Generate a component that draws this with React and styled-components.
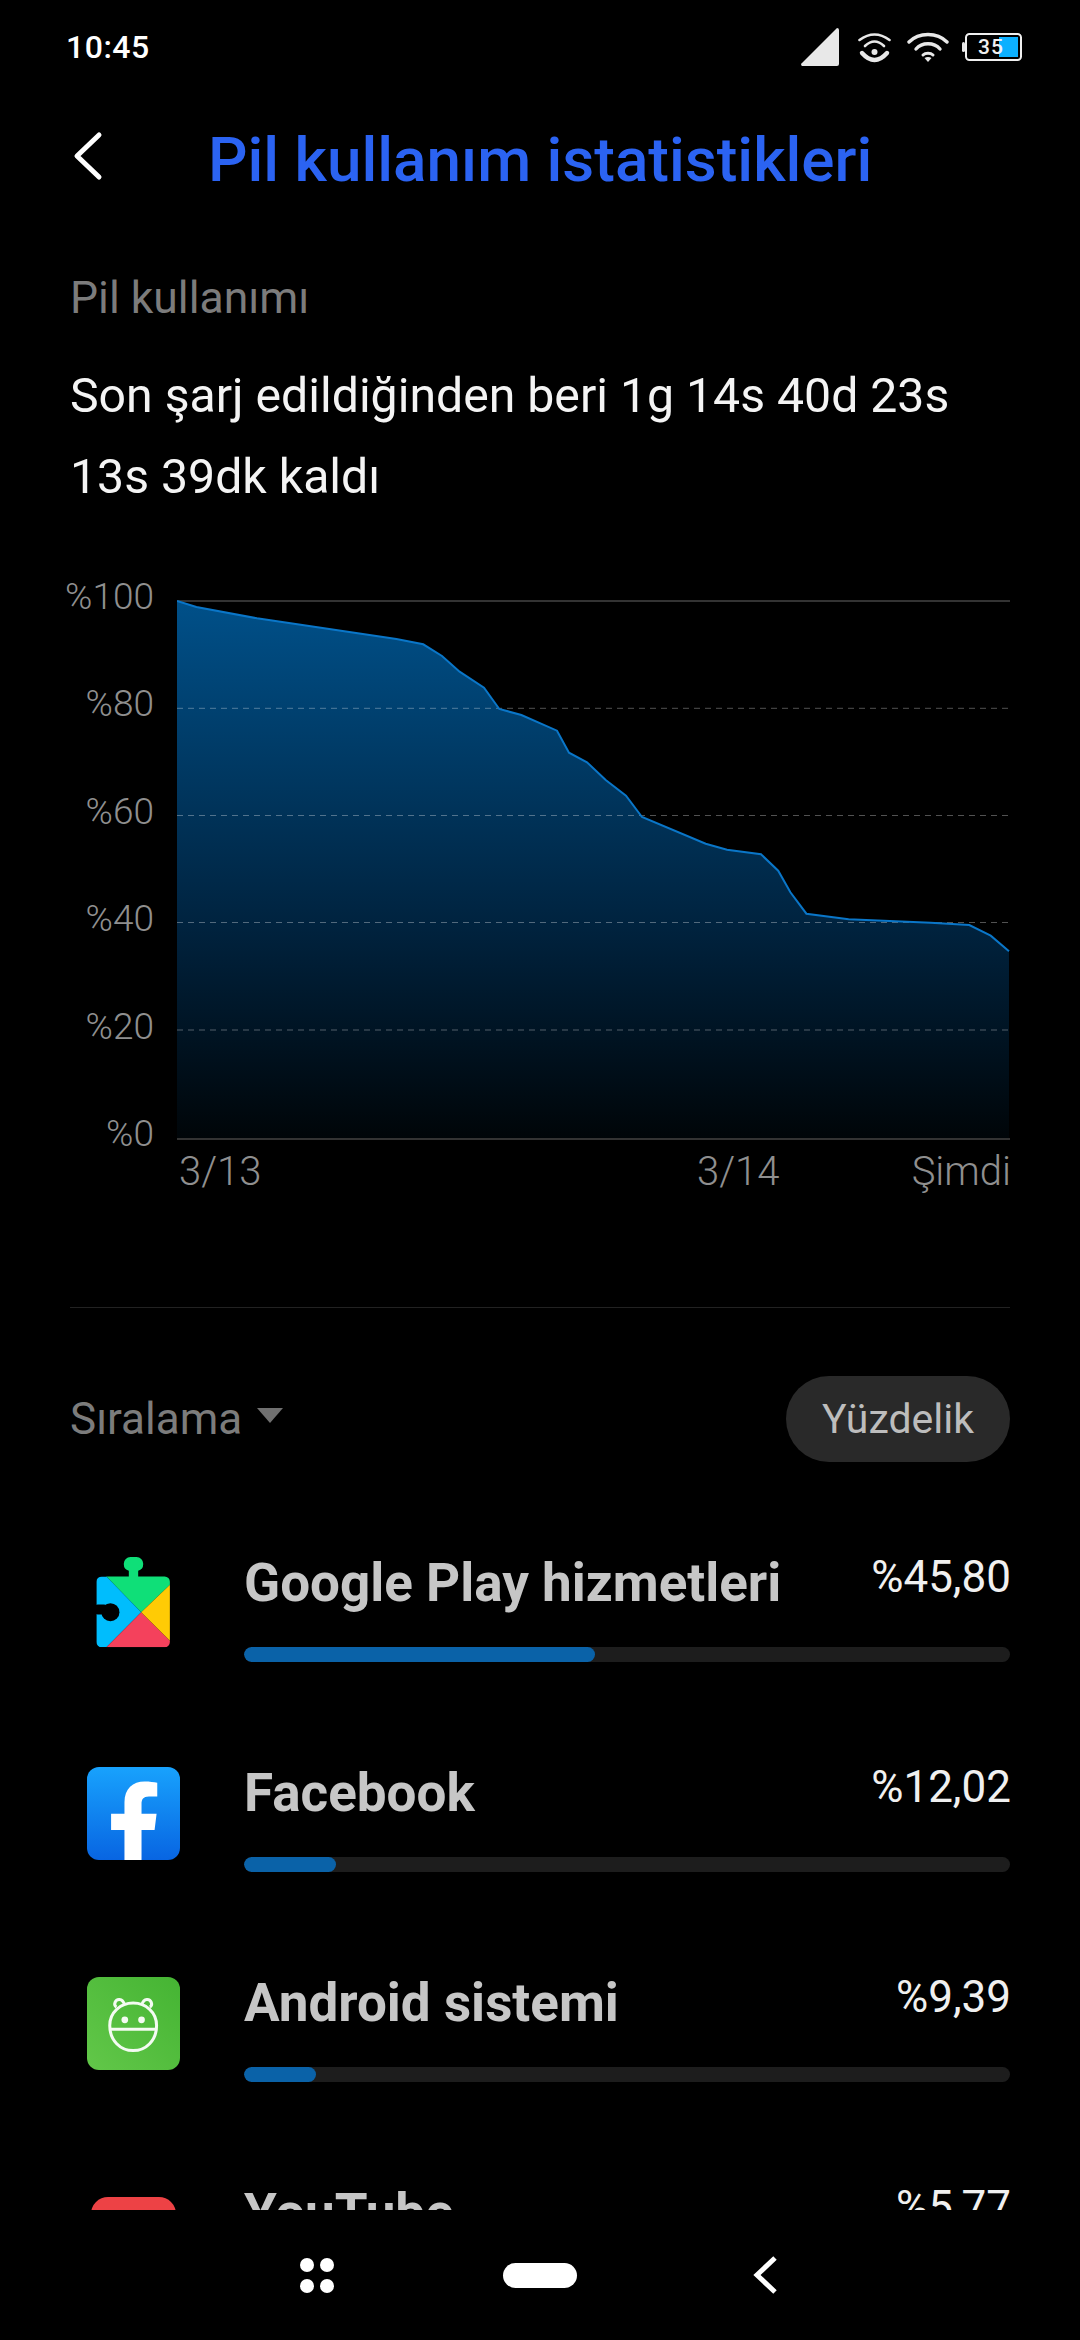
import React from "react";
import styled, { createGlobalStyle } from "styled-components";

const GlobalStyle = createGlobalStyle`
  html, body {
    margin: 0;
    padding: 0;
    background: #000;
  }
  * {
    box-sizing: border-box;
  }
`;

const curve = [
  [177, 601], [196.4, 607], [257, 618.3], [396.4, 639], [423.2, 644.3],
  [442, 656], [459.6, 671.7], [484, 687.7], [499.3, 709], [521.4, 715],
  [557, 730.7], [569, 752.7], [587, 762.3], [605.7, 780], [626, 795.7],
  [642, 817], [705.7, 843.7], [727, 849.7], [761, 854.3], [778.2, 870.7],
  [790.4, 892.3], [806.4, 913.7], [848.6, 919.3], [930.7, 922.7],
  [969.3, 925], [990.7, 935.7], [1009, 951.3],
];

const linePoints = curve.map((p) => p.join(",")).join(" ");
const areaPoints = `${linePoints} 1009,1139 177,1139`;

const axisLabels = ["%100", "%80", "%60", "%40", "%20", "%0"];
const dashedLines = [708.3, 815.5, 922.5, 1030];

const SignalIcon = () => (
  <svg width="38" height="38" viewBox="0 0 38 38">
    <path d="M36 0 a2 2 0 0 1 2 2 V36 a2 2 0 0 1 -2 2 H2 a1.6 1.6 0 0 1 -1 -3 Z" fill="#e8e8e8" />
  </svg>
);

const HotspotIcon = () => (
  <svg width="33" height="31" viewBox="0 0 33 31" fill="none" stroke="#e8e8e8" strokeLinecap="round">
    <path d="M1.5 8 Q16.5 -3 31.5 8" strokeWidth="2.6" />
    <path d="M7 14 Q16.5 5 26 14" strokeWidth="2.6" />
    <circle cx="16.5" cy="20" r="3" fill="#e8e8e8" stroke="none" />
    <path d="M4 21 Q16.5 35 29 21" strokeWidth="4.4" />
  </svg>
);

const WifiIcon = () => (
  <svg width="42" height="30" viewBox="0 0 42 30" fill="none" stroke="#e8e8e8" strokeLinecap="round">
    <path d="M2 10 C12 0 30 0 40 10" strokeWidth="3.4" />
    <path d="M9 17 C15 10 27 10 33 17" strokeWidth="3.4" />
    <path d="M16 23 C18.5 20.5 23.5 20.5 26 23" strokeWidth="3" />
    <path d="M17.5 26 L21 30 L24.5 26 C22.5 24.5 19.5 24.5 17.5 26 Z" fill="#e8e8e8" stroke="none" />
  </svg>
);

const BatteryIcon = () => (
  <svg width="60" height="28" viewBox="0 0 60 28">
    <rect x="0" y="9" width="3" height="10" rx="1.5" fill="#e8e8e8" />
    <rect x="4" y="1" width="55" height="26" rx="3.5" fill="none" stroke="#f0f0f0" strokeWidth="2" />
    <rect x="37" y="4" width="19" height="20" fill="#0cb0ff" />
    <text x="29" y="21" textAnchor="middle" fontFamily="Roboto, sans-serif" fontSize="21" fontWeight="500" letterSpacing="1" fill="#f0f0f0">
      35
    </text>
  </svg>
);

const PlayServicesIcon = () => (
  <svg width="93" height="93" viewBox="0 0 278 278">
    <defs>
      <clipPath id="puzzle">
        <rect x="28" y="58" width="220" height="212" rx="16" />
        <rect x="110" y="0" width="58" height="42" rx="20" />
        <rect x="125" y="20" width="28" height="45" />
      </clipPath>
    </defs>
    <g clipPath="url(#puzzle)">
      <polygon points="58,58 162,165 248,83 248,0 58,0" fill="#0fdf78" />
      <polygon points="0,58 58,58 162,165 58,270 0,270" fill="#00bdfd" />
      <polygon points="58,270 162,165 248,250 248,278 58,278" fill="#f4415c" />
      <polygon points="248,83 162,165 248,250" fill="#ffcb05" />
    </g>
    <circle cx="70" cy="165" r="27" fill="#000" />
    <rect x="24" y="142" width="35" height="30" rx="8" fill="#000" />
  </svg>
);

const FacebookIcon = () => (
  <svg width="93" height="93" viewBox="0 0 278 278">
    <defs>
      <linearGradient id="fbBlue" x1="0" y1="0" x2="0" y2="1">
        <stop offset="0" stopColor="#18a2fd" />
        <stop offset="1" stopColor="#0865e2" />
      </linearGradient>
    </defs>
    <rect width="278" height="278" rx="36" fill="url(#fbBlue)" />
    <path
      d="M112 278 V188 H72 V140 H112 V105 C112 65 137 43 172 43 C188 43 200 45 210 47 V88 H185 C168 88 163 97 163 110 V140 H208 L202 188 H163 V278 Z"
      fill="#fff"
    />
  </svg>
);

const AndroidIcon = () => (
  <svg width="93" height="93" viewBox="0 0 278 278">
    <defs>
      <linearGradient id="androidGreen" x1="0" y1="1" x2="1" y2="0">
        <stop offset="0" stopColor="#62c749" />
        <stop offset="1" stopColor="#45b433" />
      </linearGradient>
    </defs>
    <rect width="278" height="278" rx="36" fill="url(#androidGreen)" />
    <g fill="none" stroke="#f4fbf2" strokeWidth="9">
      <path d="M68 145 C68 105 100 78 138 78 C176 78 208 105 208 145 C208 190 176 220 138 220 C100 220 68 190 68 145 Z" />
      <path d="M68 156 H208" />
      <path d="M88 90 C78 84 84 66 97 67 C106 68 110 75 112 82" />
      <path d="M188 90 C198 84 192 66 179 67 C170 68 166 75 164 82" />
    </g>
    <circle cx="113" cy="128" r="10" fill="#f4fbf2" />
    <circle cx="163" cy="128" r="10" fill="#f4fbf2" />
  </svg>
);

const YouTubeIcon = () => (
  <svg width="93" height="93" viewBox="0 0 93 93">
    <rect x="4" y="10" width="85" height="60" rx="17" fill="#ed4245" />
  </svg>
);

const apps = [
  { name: "Google Play hizmetleri", value: 45.8, label: "%45,80", Icon: PlayServicesIcon },
  { name: "Facebook", value: 12.02, label: "%12,02", Icon: FacebookIcon },
  { name: "Android sistemi", value: 9.39, label: "%9,39", Icon: AndroidIcon },
  { name: "YouTube", value: 5.77, label: "%5,77", Icon: YouTubeIcon },
];

export default function App() {
  return (
    <Screen>
      <GlobalStyle />
      <StatusBar>
        <Clock>10:45</Clock>
        <StatusIcons>
          <SignalIcon />
          <HotspotIcon />
          <WifiIcon />
          <BatteryIcon />
        </StatusIcons>
      </StatusBar>

      <Header>
        <BackButton>
          <svg width="32" height="50" viewBox="0 0 32 50" fill="none" stroke="#fff" strokeWidth="5" strokeLinecap="round" strokeLinejoin="round">
            <path d="M27 4 L5 25 L27 46" />
          </svg>
        </BackButton>
        <Title>Pil kullanım istatistikleri</Title>
      </Header>

      <Content>
        <SectionLabel>Pil kullanımı</SectionLabel>
        <Summary>
          Son şarj edildiğinden beri 1g 14s 40d 23s
          <br />
          13s 39dk kaldı
        </Summary>

        <Chart>
          <AxisColumn>
            {axisLabels.map((label) => (
              <span key={label}>{label}</span>
            ))}
          </AxisColumn>
          <PlotColumn>
            <Plot width="834" height="541" viewBox="177 600 834 541">
              <defs>
                <linearGradient id="areaFill" x1="0" y1="601" x2="0" y2="1139" gradientUnits="userSpaceOnUse">
                  <stop offset="0" stopColor="#005089" />
                  <stop offset="0.6" stopColor="#00233f" />
                  <stop offset="1" stopColor="#000508" />
                </linearGradient>
              </defs>
              <polygon points={areaPoints} fill="url(#areaFill)" />
              <path d="M177 601 H1010" stroke="#333" strokeWidth="2" />
              <path d="M177 1139 H1010" stroke="#333" strokeWidth="2" />
              {dashedLines.map((y) => (
                <path key={y} d={`M177 ${y} H1010`} stroke="#fff" strokeOpacity="0.32" strokeWidth="1" strokeDasharray="6 5" />
              ))}
              <polyline points={linePoints} fill="none" stroke="#0a76c8" strokeWidth="2" />
            </Plot>
            <DateRow>
              <DateLabel $left="2px">3/13</DateLabel>
              <DateLabel $left="520px">3/14</DateLabel>
              <NowLabel>Şimdi</NowLabel>
            </DateRow>
          </PlotColumn>
        </Chart>

        <Divider />

        <SortRow>
          <SortLabel>
            Sıralama
            <Caret />
          </SortLabel>
          <Pill>Yüzdelik</Pill>
        </SortRow>

        <AppList>
          {apps.map(({ name, value, label, Icon }) => (
            <AppRow key={name}>
              <IconSlot>
                <Icon />
              </IconSlot>
              <AppInfo>
                <AppHeading>
                  <AppName>{name}</AppName>
                  <AppPercent>{label}</AppPercent>
                </AppHeading>
                <Track>
                  <Fill style={{ width: `${value}%` }} />
                </Track>
              </AppInfo>
            </AppRow>
          ))}
        </AppList>
      </Content>

      <NavBar>
        <Dots>
          <i />
          <i />
          <i />
          <i />
        </Dots>
        <HomePill />
        <svg width="24" height="38" viewBox="0 0 24 38" fill="none" stroke="#fff" strokeWidth="5">
          <path d="M22 2 L4 19 L22 36" />
        </svg>
      </NavBar>
    </Screen>
  );
}

const Screen = styled.div`
  width: 1080px;
  height: 2340px;
  display: flex;
  flex-direction: column;
  overflow: hidden;
  background: #000;
  font-family: Roboto, "Noto Sans", sans-serif;
  color: #fff;
`;

const StatusBar = styled.div`
  height: 94px;
  flex: none;
  display: flex;
  justify-content: space-between;
  align-items: center;
  padding: 0 58px 0 66px;
`;

const Clock = styled.div`
  font-size: 32px;
  font-weight: 500;
  letter-spacing: 0.5px;
`;

const StatusIcons = styled.div`
  display: flex;
  align-items: center;
  svg:nth-child(2) {
    margin-left: 19px;
  }
  svg:nth-child(3) {
    margin-left: 16px;
  }
  svg:nth-child(4) {
    margin-left: 13px;
  }
`;

const Header = styled.div`
  height: 130px;
  flex: none;
  display: flex;
  align-items: center;
  padding-left: 72px;
`;

const BackButton = styled.div`
  width: 136px;
  display: flex;
  margin-bottom: 6px;
`;

const Title = styled.h1`
  margin: 0;
  font-size: 62px;
  font-weight: 500;
  color: #2b63f2;
`;

const Content = styled.main`
  flex: 1;
  min-height: 0;
  overflow: hidden;
  padding: 44px 70px 0;
`;

const SectionLabel = styled.div`
  font-size: 44.5px;
  line-height: 60px;
  color: #7c7c7c;
`;

const Summary = styled.p`
  margin: 27px 0 0;
  font-size: 48.2px;
  line-height: 81px;
  color: #f4f4f4;
`;

const Chart = styled.section`
  margin-top: 58px;
  display: flex;
  gap: 23px;
`;

const AxisColumn = styled.div`
  width: 84px;
  height: 581px;
  flex: none;
  display: flex;
  flex-direction: column;
  justify-content: space-between;
  align-items: flex-end;
  font-size: 37px;
  line-height: 44px;
  font-weight: 300;
  color: #8f8f8f;
`;

const PlotColumn = styled.div`
  padding-top: 25px;
  width: 833px;
`;

const Plot = styled.svg`
  display: block;
`;

const DateRow = styled.div`
  position: relative;
  height: 44px;
  margin-top: 9px;
  font-size: 40px;
  line-height: 44px;
  font-weight: 300;
  color: #8f8f8f;
`;

const DateLabel = styled.span`
  position: absolute;
  left: ${(p) => p.$left};
`;

const NowLabel = styled.span`
  position: absolute;
  right: -1px;
`;

const Divider = styled.div`
  height: 1px;
  margin-top: 113px;
  background: #222;
`;

const SortRow = styled.div`
  margin-top: 68px;
  display: flex;
  justify-content: space-between;
  align-items: center;
`;

const SortLabel = styled.div`
  display: flex;
  align-items: center;
  gap: 15px;
  font-size: 44px;
  color: #7c7c7c;
`;

const Caret = styled.span`
  width: 0;
  height: 0;
  margin-top: -8px;
  border-left: 13px solid transparent;
  border-right: 13px solid transparent;
  border-top: 15px solid #707070;
`;

const Pill = styled.div`
  width: 224px;
  height: 86px;
  border-radius: 43px;
  display: flex;
  align-items: center;
  justify-content: center;
  background: #292929;
  color: #bdbdbd;
  font-size: 41px;
`;

const AppList = styled.div`
  margin-top: 95px;
  display: flex;
  flex-direction: column;
  gap: 117px;
`;

const AppRow = styled.div`
  display: flex;
  align-items: flex-start;
  height: 93px;
  padding-left: 17px;
`;

const IconSlot = styled.div`
  width: 93px;
  height: 93px;
  flex: none;
  margin-right: 64px;
  svg {
    display: block;
  }
`;

const AppInfo = styled.div`
  flex: 1;
  min-width: 0;
`;

const AppHeading = styled.div`
  display: flex;
  justify-content: space-between;
  align-items: flex-start;
  height: 90px;
`;

const AppName = styled.div`
  font-size: 53px;
  line-height: 52px;
  font-weight: 700;
  color: #c6c6c6;
`;

const AppPercent = styled.div`
  margin-right: -1px;
  font-size: 44px;
  line-height: 40px;
  color: #f0f0f0;
`;

const Track = styled.div`
  height: 15px;
  border-radius: 8px;
  background: #1d1d1d;
  overflow: hidden;
`;

const Fill = styled.div`
  height: 100%;
  border-radius: 8px;
  background: #0a62a8;
`;

const NavBar = styled.nav`
  height: 130px;
  flex: none;
  display: flex;
  align-items: center;
  padding-left: 300px;
`;

const Dots = styled.div`
  width: 34px;
  margin-right: 169px;
  display: grid;
  grid-template-columns: 14px 14px;
  justify-content: space-between;
  row-gap: 7px;
  i {
    display: block;
    height: 14px;
    border-radius: 50%;
    background: #fff;
  }
`;

const HomePill = styled.div`
  width: 74px;
  height: 25px;
  margin-right: 176px;
  border-radius: 13px;
  background: #fff;
`;
